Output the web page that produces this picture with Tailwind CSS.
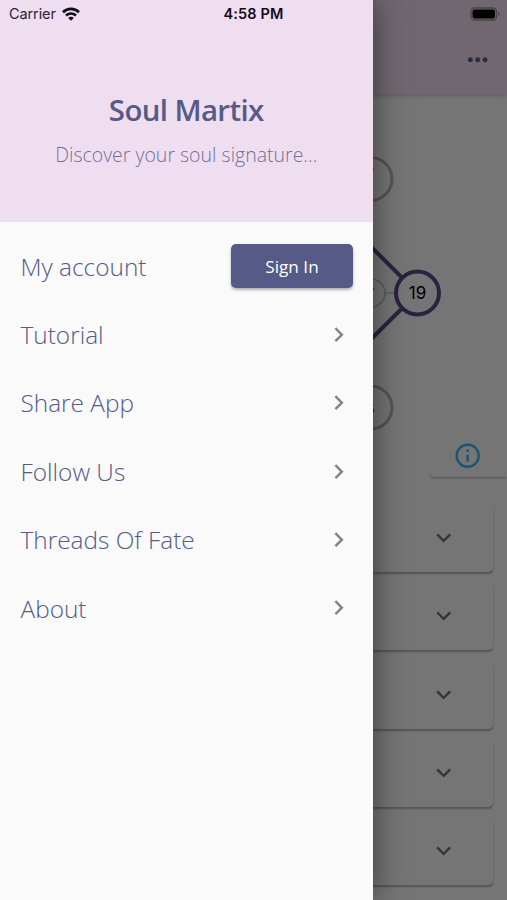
<!DOCTYPE html>
<html lang="en">
<head>
<meta charset="utf-8">
<title>Soul Martix</title>
<script src="https://cdn.jsdelivr.net/npm/@tailwindcss/browser@4"></script>
</head>
<body class="overflow-hidden">
<svg class="hidden">
  <symbol id="right" viewBox="0 0 24 24"><path d="M10 6L8.59 7.41 13.17 12l-4.58 4.59L10 18l6-6z"/></symbol>
  <symbol id="down" viewBox="0 0 24 24"><path d="M16.59 8.59L12 13.17 7.41 8.59 6 10l6 6 6-6z"/></symbol>
</svg>
<div class="relative h-[900px] w-[507px] overflow-hidden bg-[#fefefe] font-['Open_Sans',sans-serif]">
  <!-- Page behind the drawer -->
  <header class="flex h-[94px] items-end justify-end bg-[#f6e1f4] pr-[15px] pb-[20px] shadow-[0_1px_5px_rgba(0,0,0,0.25)]">
    <svg class="size-[29.4px]" viewBox="0 0 24 24" fill="#555a86"><path d="M6 10c-1.1 0-2 .9-2 2s.9 2 2 2 2-.9 2-2-.9-2-2-2zm12 0c-1.1 0-2 .9-2 2s.9 2 2 2 2-.9 2-2-.9-2-2-2zm-6 0c-1.100 0-2 .9-2 2s.9 2 2 2 2-.9 2-2-.9-2-2-2z"/></svg>
  </header>
  <main>
    <svg class="block h-[338px] w-[507px]" viewBox="0 94 507 338" fill="none" font-family="Inter, sans-serif" font-size="16.500" text-anchor="middle">
      <path d="M340 216L417.500 293L340 370" stroke="#57508a" stroke-width="4"/>
      <path d="M380 293H396" stroke="#bccfd6" stroke-width="1.500"/>
      <circle cx="371" cy="293" r="14" fill="#fefefe" stroke="#a9d3d8" stroke-width="1.600"/>
      <circle cx="370.500" cy="179" r="21.500" fill="#fefefe" stroke="#c4b0c2" stroke-width="3"/>
      <circle cx="370.500" cy="407.500" r="21.500" fill="#fefefe" stroke="#c4b0c2" stroke-width="3"/>
      <circle cx="417.500" cy="293" r="21.500" fill="#fefefe" stroke="#57508a" stroke-width="4"/>
      <g fill="#000">
        <text x="369.500" y="180">7</text>
        <text x="370.500" y="297.500" font-size="13">7</text>
        <text x="369.500" y="413.500">8</text>
        <text x="417.500" y="298.800" font-size="17">19</text>
      </g>
    </svg>
    <div class="flex justify-end">
      <div class="flex h-[45px] w-[78px] items-center justify-center rounded-bl-[5px] bg-[#fefefe] pt-[2px] shadow-[0_2px_2px_-1px_rgba(0,0,0,0.3)]">
        <svg class="size-[29.4px]" viewBox="0 0 24 24" fill="#35bdf8"><path d="M11 7h2v2h-2zm0 4h2v6h-2zm1-9C6.480 2 2 6.480 2 12s4.480 10 10 10 10-4.480 10-10S17.520 2 12 2zm0 18c-4.410 0-8-3.590-8-8s3.590-8 8-8 8 3.590 8 8-3.590 8-8 8z"/></svg>
      </div>
    </div>
    <div class="flex flex-col gap-[9.800px] px-[14px] pt-[26.500px]">
      <div class="flex h-[68.500px] items-center justify-end rounded-[5px] bg-[#fefefe] pr-[35px] shadow-[0_2px_2px_-0.5px_rgba(0,0,0,0.28)]"><svg class="size-[29.400px]" fill="#757575"><use href="#down"/></svg></div>
      <div class="flex h-[68.500px] items-center justify-end rounded-[5px] bg-[#fefefe] pr-[35px] shadow-[0_2px_2px_-0.5px_rgba(0,0,0,0.28)]"><svg class="size-[29.400px]" fill="#757575"><use href="#down"/></svg></div>
      <div class="flex h-[68.500px] items-center justify-end rounded-[5px] bg-[#fefefe] pr-[35px] shadow-[0_2px_2px_-0.5px_rgba(0,0,0,0.28)]"><svg class="size-[29.400px]" fill="#757575"><use href="#down"/></svg></div>
      <div class="flex h-[68.500px] items-center justify-end rounded-[5px] bg-[#fefefe] pr-[35px] shadow-[0_2px_2px_-0.5px_rgba(0,0,0,0.28)]"><svg class="size-[29.400px]" fill="#757575"><use href="#down"/></svg></div>
      <div class="flex h-[68.500px] items-center justify-end rounded-[5px] bg-[#fefefe] pr-[35px] shadow-[0_2px_2px_-0.5px_rgba(0,0,0,0.28)]"><svg class="size-[29.400px]" fill="#757575"><use href="#down"/></svg></div>
    </div>
  </main>
  <div class="absolute inset-0 bg-black/54"></div>

  <!-- Drawer -->
  <aside class="absolute inset-y-0 left-0 w-[372.500px] bg-[#fafafa] text-[#555a86] shadow-[0_0_30px_rgba(0,0,0,0.5)]">
    <div class="flex h-[222px] flex-col items-center bg-[#efddf0] pt-[89px]">
      <h1 class="text-[29.400px] leading-[42px] font-semibold tracking-[-0.600px]">Soul Martix</h1>
      <p class="mt-[10px] text-[19.500px] leading-[28px] font-light text-[#555a86]/85">Discover your soul signature...</p>
    </div>
    <nav class="flex flex-col pt-[10px] text-[24.400px] font-light">
      <div class="flex h-[68.400px] items-center justify-between pr-[19.500px] pl-[20.500px]">
        <span class="pt-[1.500px]">My account</span>
        <button class="h-[44px] w-[122px] rounded-[5px] bg-[#555a86] pt-[1.500px] text-[17.200px] font-normal text-white shadow-[0_2px_3px_rgba(0,0,0,0.3)]">Sign In</button>
      </div>
      <a class="flex h-[68.400px] items-center justify-between pr-[19.500px] pl-[20.500px]"><span class="pt-[1.500px]">Tutorial</span><svg class="size-[29.400px]" fill="#848484"><use href="#right"/></svg></a>
      <a class="flex h-[68.400px] items-center justify-between pr-[19.500px] pl-[20.500px]"><span class="pt-[1.500px]">Share App</span><svg class="size-[29.400px]" fill="#848484"><use href="#right"/></svg></a>
      <a class="flex h-[68.400px] items-center justify-between pr-[19.500px] pl-[20.500px]"><span class="pt-[1.500px]">Follow Us</span><svg class="size-[29.400px]" fill="#848484"><use href="#right"/></svg></a>
      <a class="flex h-[68.400px] items-center justify-between pr-[19.500px] pl-[20.500px]"><span class="pt-[1.500px]">Threads Of Fate</span><svg class="size-[29.400px]" fill="#848484"><use href="#right"/></svg></a>
      <a class="flex h-[68.400px] items-center justify-between pr-[19.500px] pl-[20.500px]"><span class="pt-[1.500px]">About</span><svg class="size-[29.400px]" fill="#848484"><use href="#right"/></svg></a>
    </nav>
  </aside>

  <!-- System status bar -->
  <div class="absolute inset-x-0 top-0 grid h-[27px] grid-cols-3 items-center pr-[7px] pl-[9px] font-['Inter',sans-serif] text-[14.500px] text-[#2a2430]">
    <div class="flex items-center gap-[6px]"><span class="tracking-[-0.1px]">Carrier</span>
      <svg class="h-[14px] w-[18px]" viewBox="0 0 18 14" fill="none" stroke="#120d15" stroke-width="2.700"><path d="M1 5.200C5.500.700 12.500.700 17 5.200M4 8.500c2.800-2.700 7.200-2.700 10 0"/><path d="M9 13.700L6.200 10.900c1.600-1.500 4-1.500 5.600 0z" fill="#120d15" stroke="none"/></svg>
    </div>
    <div class="-ml-[2px] text-center font-semibold tracking-[0.1px] text-[#120d15]">4:58 PM</div>
    <svg class="h-[14px] w-[30px] justify-self-end" viewBox="0 0 30 14"><rect x="1" y="1" width="25.500" height="12" rx="3.500" fill="none" stroke="#4b444b" stroke-width="1.300"/><rect x="2.500" y="2.500" width="22.500" height="9" rx="2" fill="#000"/><path d="M28 5v4c1.800-.7 1.800-3.300 0-4z" fill="#4b444b"/></svg>
  </div>
</div>
</body>
</html>
